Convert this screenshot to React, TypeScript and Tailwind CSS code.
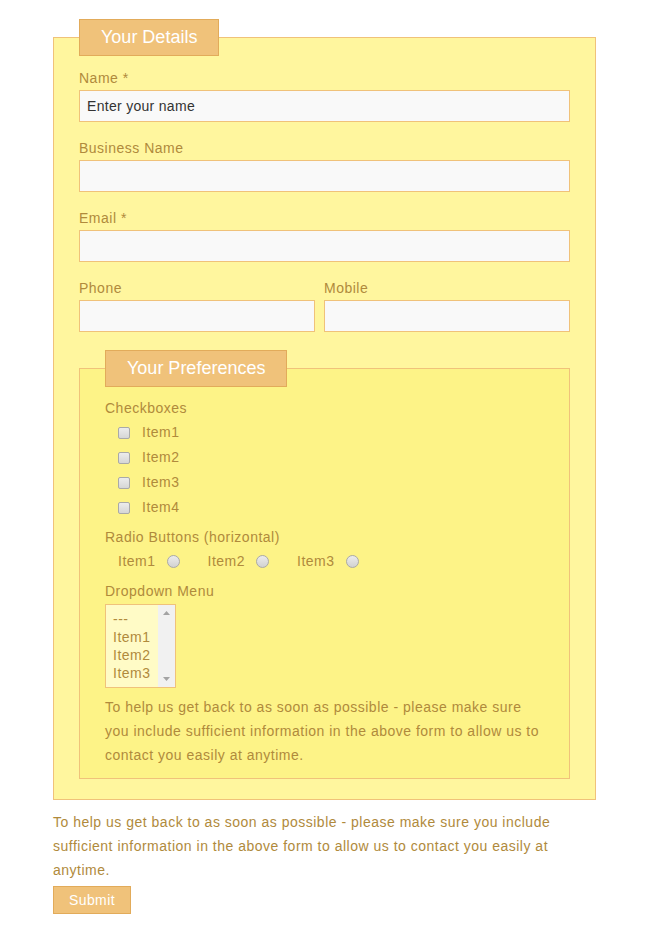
import React from "react";

const font = { fontFamily: '"Liberation Sans", Arial, sans-serif' };

function Label({ children }: { children: React.ReactNode }) {
  return <div className="h-[20px] text-[14px] leading-[20px] tracking-[0.5px] text-[#b08a3c] mb-[2px]">{children}</div>;
}

function Field({ label, placeholder, className = "" }: { label: string; placeholder?: string; className?: string }) {
  return (
    <div className={className}>
      <Label>{label}</Label>
      <input
        placeholder={placeholder}
        className="block h-[32px] w-full border border-[#f0c27a] bg-[#f9f9f9] pl-[7px] text-[14px] tracking-[0.3px] text-[#333] outline-none placeholder:text-[#333]"
        style={font}
      />
    </div>
  );
}

function Checkbox() {
  return (
    <span className="inline-block h-[12px] w-[12px] rounded-[2px] border border-[#a9a9a9] bg-gradient-to-b from-[#ececec] to-[#d6d6d6]" />
  );
}

function Radio() {
  return (
    <span className="inline-block h-[13px] w-[13px] rounded-full border border-[#a9a9a9] bg-gradient-to-b from-[#ececec] to-[#d2d2d2]" />
  );
}

export default function App() {
  return (
    <div className="min-h-[940px] bg-white pt-[19px] pl-[53px] pr-[54px]" style={font}>
      <fieldset className="border border-[#f0c27a] bg-[#fff69e] px-[25px] pb-[20px]">
        <legend className="h-[37px] border border-[#e2ab5a] bg-[#f0c27a] px-[21px] text-[18px] leading-[35px] text-white">
          Your Details
        </legend>
        <div className="pt-[12px]">
          <Field label="Name *" placeholder="Enter your name" className="mb-[16px]" />
          <Field label="Business Name" className="mb-[16px]" />
          <Field label="Email *" className="mb-[16px]" />
          <div className="grid grid-cols-[236px_1fr] gap-[9px]">
            <Field label="Phone" />
            <Field label="Mobile" />
          </div>
        </div>

        <fieldset className="mt-[18px] border border-[#f0c27a] bg-[#fdf387] px-[25px] pb-[11px]">
          <legend className="h-[37px] border border-[#e2ab5a] bg-[#f0c27a] px-[21px] text-[18px] leading-[35px] text-white">
            Your Preferences
          </legend>
          <div className="pt-[11px]">
            <Label>Checkboxes</Label>
            <div className="flex flex-col">
              {["Item1", "Item2", "Item3", "Item4"].map((it) => (
                <div key={it} className="flex h-[25px] items-center pl-[13px]">
                  <Checkbox />
                  <span className="ml-[12px] text-[14px] tracking-[0.5px] text-[#b08a3c]">{it}</span>
                </div>
              ))}
            </div>
            <div className="mt-[7px]">
              <Label>Radio Buttons (horizontal)</Label>
            </div>
            <div className="flex h-[24px] items-center pl-[13px] text-[14px] tracking-[0.5px] text-[#b08a3c]">
              <span>Item1</span>
              <span className="ml-[11px] flex"><Radio /></span>
              <span className="ml-[28px]">Item2</span>
              <span className="ml-[11px] flex"><Radio /></span>
              <span className="ml-[28px]">Item3</span>
              <span className="ml-[11px] flex"><Radio /></span>
            </div>
            <div className="mt-[8px]">
              <Label>Dropdown Menu</Label>
            </div>
            <div className="mt-[3px] flex h-[84px] w-[71px] border border-[#f0c27a] bg-[#fffbc6]">
              <div className="flex-1 pl-[7px] pt-[5px] text-[14px] leading-[18px] tracking-[0.5px] text-[#b08a3c]">
                <div>---</div>
                <div>Item1</div>
                <div>Item2</div>
                <div>Item3</div>
              </div>
              <div className="flex w-[17px] flex-col items-center justify-between bg-[#f1f1f1] py-[6px]">
                <svg width="7" height="4" viewBox="0 0 7 4"><path d="M0 4 L3.5 0 L7 4 Z" fill="#a3a3a3" /></svg>
                <svg width="7" height="4" viewBox="0 0 7 4"><path d="M0 0 L3.5 4 L7 0 Z" fill="#a3a3a3" /></svg>
              </div>
            </div>
            <p className="mt-[7px] text-[14px] leading-[24px] tracking-[0.5px] text-[#b08a3c]">
              To help us get back to as soon as possible - please make sure you include sufficient information in the above form to allow us to contact you easily at anytime.
            </p>
          </div>
        </fieldset>
      </fieldset>
      <p className="mt-[10px] text-[14px] leading-[24px] tracking-[0.5px] text-[#b08a3c]">
        To help us get back to as soon as possible - please make sure you include sufficient information in the above form to allow us to contact you easily at anytime.
      </p>
      <button className="mt-[4px] h-[28px] w-[78px] border border-[#e2ab5a] bg-[#f0c27a] text-[14px] tracking-[0.4px] text-white" style={font}>
        Submit
      </button>
    </div>
  );
}
